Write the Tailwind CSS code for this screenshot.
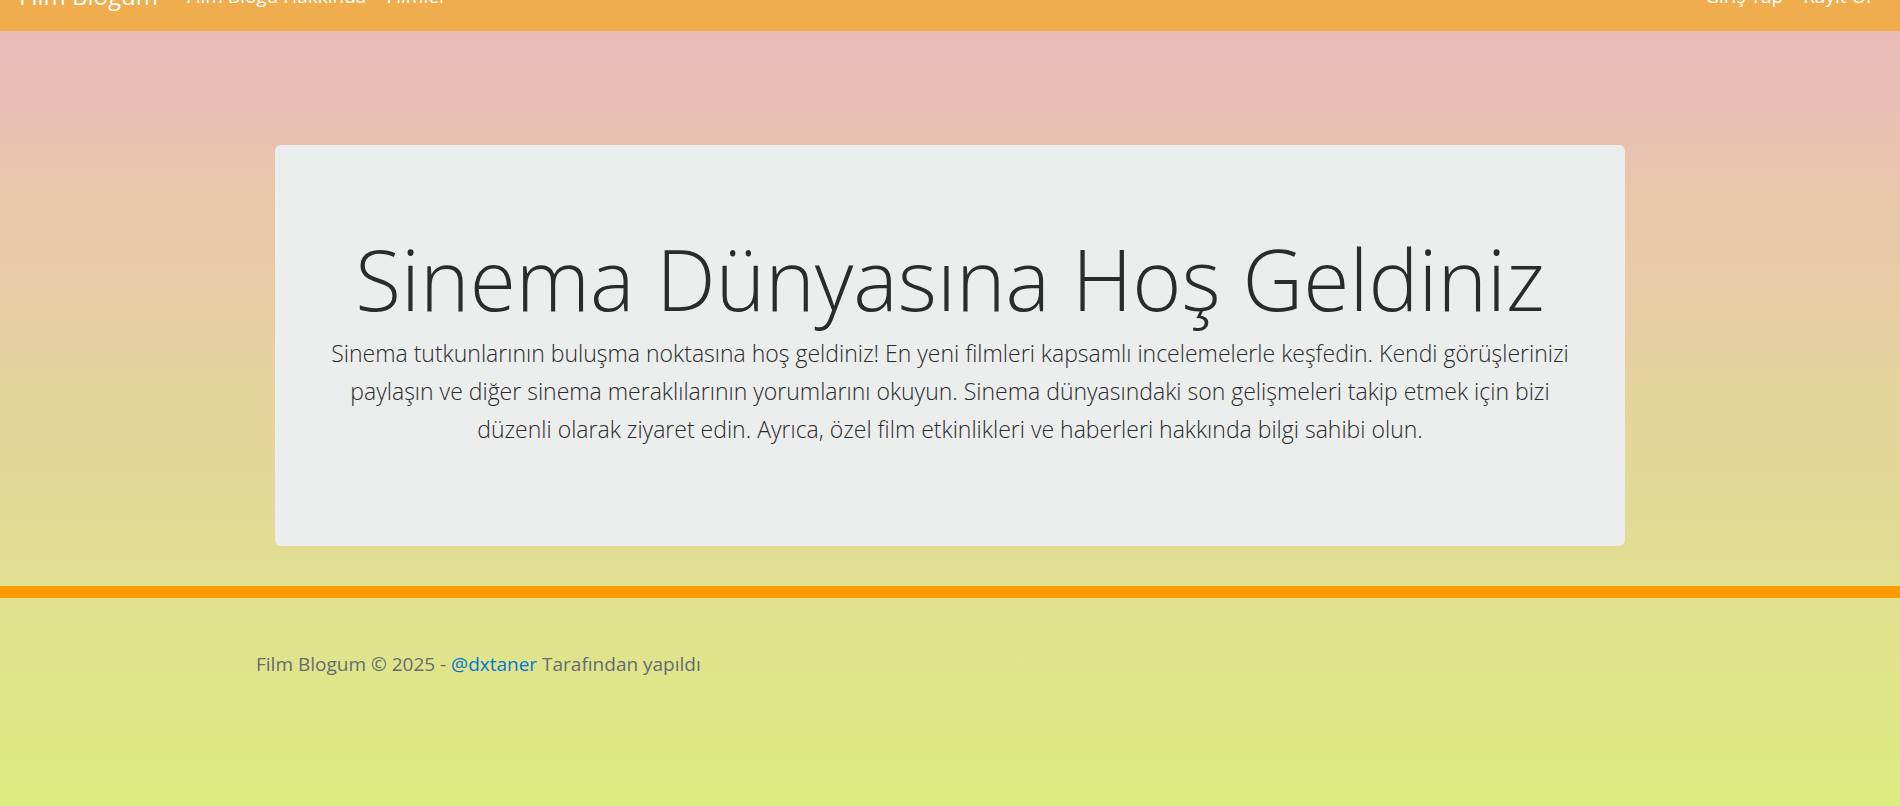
<!DOCTYPE html>
<html lang="tr">
<head>
<meta charset="utf-8">
<meta name="viewport" content="width=device-width, initial-scale=1">
<title>Film Blogum</title>
<script src="https://cdn.jsdelivr.net/npm/@tailwindcss/browser@4"></script>
</head>
<body class="min-h-screen overflow-x-hidden font-['Open_Sans','Noto_Sans',sans-serif] text-[19px] text-[#292b2c] bg-[linear-gradient(to_bottom,#ebbab8_31px,#eabdb6_80px,#e8c7ac_190px,#e5d29d_375px,#e1df90_590px,#dced80_800px)]">
<header class="flex h-[31px] items-end justify-between overflow-hidden bg-[#f0ad4e] px-[19px] pb-[19px] text-white">
  <nav class="flex items-center">
    <a href="#" class="mr-7 text-[24px] leading-8">Film Blogum</a>
    <a href="#" class="mr-5 leading-8">Film Blogu Hakkında</a>
    <a href="#" class="leading-8">Filmler</a>
  </nav>
  <nav class="mr-[10px] flex items-center gap-5">
    <a href="#" class="leading-8">Giriş Yap</a>
    <a href="#" class="leading-8">Kayıt Ol</a>
  </nav>
</header>
<main class="px-5 pt-[114px] pb-10">
  <section class="mx-auto max-w-[1350px] rounded-md bg-[#eceeed] px-10 pt-20 pb-[98px] text-center font-light">
    <h1 class="text-[84px] leading-[108px]">Sinema Dünyasına Hoş Geldiniz</h1>
    <p class="mt-px text-[23px] leading-[38px]">Sinema tutkunlarının buluşma noktasına hoş geldiniz! En yeni filmleri kapsamlı incelemelerle keşfedin. Kendi görüşlerinizi paylaşın ve diğer sinema meraklılarının yorumlarını okuyun. Sinema dünyasındaki son gelişmeleri takip etmek için bizi düzenli olarak ziyaret edin. Ayrıca, özel film etkinlikleri ve haberleri hakkında bilgi sahibi olun.</p>
  </section>
</main>
<footer class="border-t-[12px] border-[#ff9900] px-5 py-[50px]">
  <p class="mx-auto max-w-[1388px] leading-8 text-[#636c72]">Film Blogum © 2025 - <a href="#" class="text-[#0275d8]">@dxtaner</a> Tarafından yapıldı</p>
</footer>
</body>
</html>
